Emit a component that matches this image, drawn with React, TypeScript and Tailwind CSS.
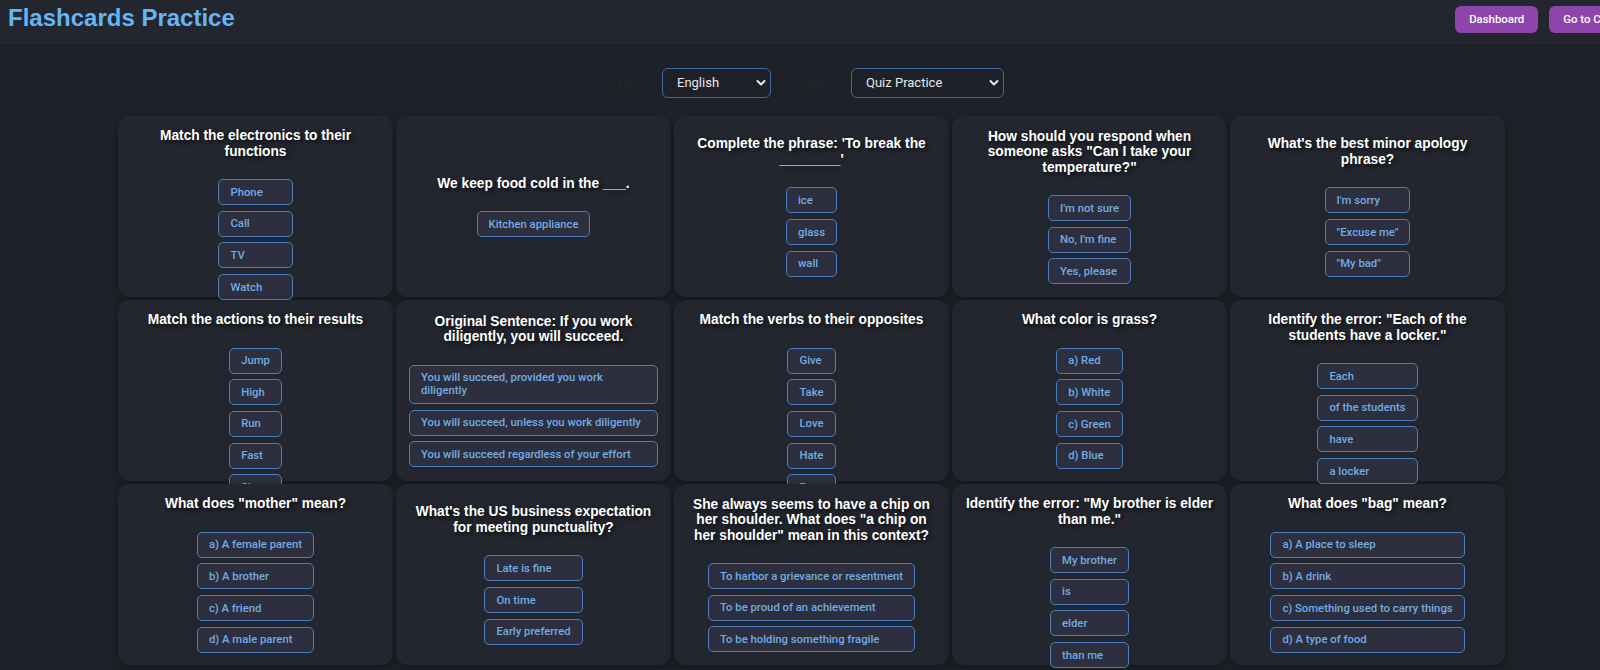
type Question = {
  title: string;
  options: string[];
};

const questions: Question[] = [
  { title: "Match the electronics to their functions", options: ["Phone", "Call", "TV", "Watch", "Computer", "Browse"] },
  { title: "We keep food cold in the ___.", options: ["Kitchen appliance"] },
  { title: "Complete the phrase: 'To break the ________'", options: ["ice", "glass", "wall"] },
  { title: 'How should you respond when someone asks "Can I take your temperature?"', options: ["I'm not sure", "No, I'm fine", "Yes, please"] },
  { title: "What's the best minor apology phrase?", options: ["I'm sorry", '"Excuse me"', '"My bad"'] },
  { title: "Match the actions to their results", options: ["Jump", "High", "Run", "Fast", "Sleep", "Rest"] },
  {
    title: "Original Sentence: If you work diligently, you will succeed.",
    options: [
      "You will succeed, provided you work diligently",
      "You will succeed, unless you work diligently",
      "You will succeed regardless of your effort",
    ],
  },
  { title: "Match the verbs to their opposites", options: ["Give", "Take", "Love", "Hate", "Buy", "Sell"] },
  { title: "What color is grass?", options: ["a) Red", "b) White", "c) Green", "d) Blue"] },
  { title: 'Identify the error: "Each of the students have a locker."', options: ["Each", "of the students", "have", "a locker"] },
  { title: 'What does "mother" mean?', options: ["a) A female parent", "b) A brother", "c) A friend", "d) A male parent"] },
  { title: "What's the US business expectation for meeting punctuality?", options: ["Late is fine", "On time", "Early preferred"] },
  {
    title: 'She always seems to have a chip on her shoulder. What does "a chip on her shoulder" mean in this context?',
    options: ["To harbor a grievance or resentment", "To be proud of an achievement", "To be holding something fragile"],
  },
  { title: 'Identify the error: "My brother is elder than me."', options: ["My brother", "is", "elder", "than me"] },
  {
    title: 'What does "bag" mean?',
    options: ["a) A place to sleep", "b) A drink", "c) Something used to carry things", "d) A type of food"],
  },
];

function Chevron() {
  return (
    <svg
      className="pointer-events-none absolute right-[5px] top-1/2 -translate-y-1/2"
      width="10"
      height="7"
      viewBox="0 0 10 7"
      fill="none"
    >
      <polyline points="1.5,1.5 5,5 8.5,1.5" stroke="#e5e7eb" strokeWidth="2" strokeLinecap="round" strokeLinejoin="round" />
    </svg>
  );
}

function Select({ value, options, width }: { value: string; options: string[]; width: string }) {
  return (
    <div className={`relative ${width}`}>
      <select
        defaultValue={value}
        className="h-[30px] w-full appearance-none rounded-[6px] border border-[#3d6aa3] bg-[#1e2127] pl-[14px] text-[13px] text-[#e8e8e8] outline-none"
      >
        {options.map((o) => (
          <option key={o}>{o}</option>
        ))}
      </select>
      <Chevron />
    </div>
  );
}

function QuestionCard({ q }: { q: Question }) {
  return (
    <div className="relative flex flex-col rounded-xl bg-[#23262e] px-[13px] py-3 shadow-[0_4px_10px_rgba(0,0,0,0.3)]">
      <div className="my-auto flex flex-col items-center">
        <h3 className="mb-5 text-center font-['Liberation_Sans',Arial,sans-serif] text-[13.75px] font-bold leading-[15.5px] text-white [text-shadow:2px_2px_4px_rgba(0,0,0,0.75)]">
          {q.title}
        </h3>
        <div className="flex flex-col gap-[5.7px]">
          {q.options.map((o) => (
            <button
              key={o}
              className="rounded-[5px] border border-[#4a7ec0] bg-[#2d2f3e] px-[11px] py-[5.5px] text-left text-[11.3px] font-medium leading-[13px] text-[#70ace4]"
            >
              {o}
            </button>
          ))}
        </div>
      </div>
    </div>
  );
}

export default function App() {
  return (
    <div className="min-h-screen overflow-hidden bg-[#1e2127] font-['Roboto',sans-serif]">
      <div className="w-[1623px]">
        <header className="flex h-[45px] items-start border-b border-[#1a1c21] bg-[#23262e] pl-2 pt-1">
          <h1 className="font-['Liberation_Sans',Arial,sans-serif] text-[24px] font-bold leading-[28px] text-[#64b5f6]">
            Flashcards Practice
          </h1>
          <div className="-mr-[8px] ml-auto mt-[2px] flex shrink-0 gap-[11px]">
            <button className="h-[27px] rounded-[6px] bg-[#8e44ad] px-[14px] text-[11.4px] font-medium text-white">Dashboard</button>
            <button className="h-[27px] rounded-[6px] bg-[#8e44ad] px-[14px] text-[11.4px] font-medium text-white">Go to Chat</button>
          </div>
        </header>

        <div className="mt-[23px] flex items-center justify-center">
          <span className="w-[16px] overflow-hidden whitespace-nowrap text-[10px] text-[#262930]">Lang</span>
          <div className="ml-[27px]">
            <Select value="English" options={["English", "Spanish", "French"]} width="w-[109px]" />
          </div>
          <span className="ml-[36px] w-[16px] overflow-hidden whitespace-nowrap text-[10px] text-[#262930]">Mode</span>
          <div className="ml-[28px]">
            <Select value="Quiz Practice" options={["Quiz Practice", "Flashcards"]} width="w-[153px]" />
          </div>
        </div>

        <div className="mt-[18px] grid auto-rows-[181px] grid-cols-[repeat(5,275px)] justify-center gap-[3px]">
          {questions.map((q) => (
            <QuestionCard key={q.title} q={q} />
          ))}
        </div>
      </div>
    </div>
  );
}
